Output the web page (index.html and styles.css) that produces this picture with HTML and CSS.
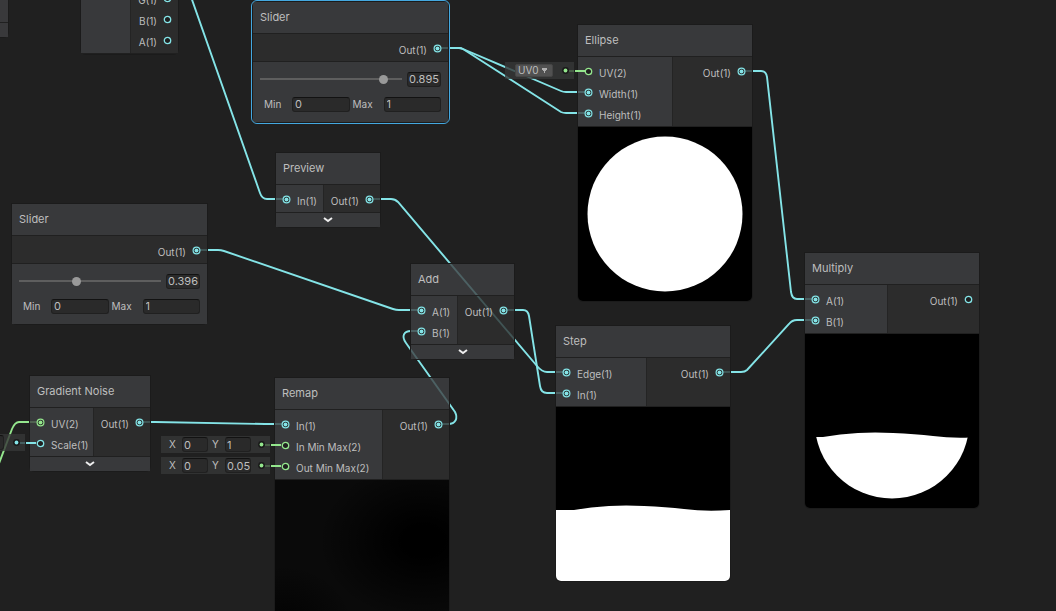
FILE: index.html
```html
<!DOCTYPE html>
<html lang="en">
<head>
<meta charset="utf-8">
<title>Shader Graph</title>
<link rel="stylesheet" href="styles.css">
</head>
<body>
<svg class="defs" aria-hidden="true">
  <symbol id="on" viewBox="0 0 9 9"><circle cx="4.5" cy="4.5" r="3.4" fill="#202020" stroke="currentColor" stroke-width="1.2"/><circle cx="4.5" cy="4.5" r="2" fill="currentColor"/></symbol>
  <symbol id="off" viewBox="0 0 9 9"><circle cx="4.5" cy="4.5" r="3.2" fill="#202020" stroke="currentColor" stroke-width="1.3"/></symbol>
  <symbol id="dot" viewBox="0 0 9 9"><circle cx="4.5" cy="4.5" r="3.4" fill="#191919"/><circle cx="4.5" cy="4.5" r="1.9" fill="currentColor"/></symbol>
  <symbol id="chev" viewBox="0 0 10 6"><path d="M1 1 L5 4 L9 1" fill="none" stroke="#eeeeee" stroke-width="2"/></symbol>
</svg>
<main class="canvas">
  <svg class="wires" aria-hidden="true">
    <path d="M190 -6 L260 193 Q262 199 267 199 H286"/>
    <path d="M437 48 H459 Q461 48 463 49 L561 91 Q563 92 566 92 H588"/>
    <path d="M437 48 H459 Q461 48 463 49 L561 112 Q563 113 566 113 H588"/>
    <path d="M742 71 H761 Q766 71 767 77 L791 292 Q792 299 797 299 H816"/>
    <path d="M369 199 H391 Q395 199 398 202 L537 366 Q542 372 547 372 H567"/>
    <path d="M196 250 H218 Q221 250 224 251 L393 309 Q396 310 399 310 H421"/>
    <path d="M503 310 H523 Q528 310 529 316 L540 386 Q541 393 547 393 H567"/>
    <path d="M438 424 H448 C456 424 458 418 455 412 L406 343 C401 336 404 331 411 331 H421"/>
    <path d="M140 422 H155 L265 424 H285"/>
    <path d="M720 372 H741 Q745 372 747 370 L789 324 Q792 320 797 320 H816"/>
    <path class="green" d="M-2 466 L12 429 Q15 422 19 422 H40"/>
  </svg>

  <section class="node edge-frag"><div class="frag-top"></div><div class="frag-bottom"></div></section>

  <section class="node split">
    <div class="ports">
      <div class="ins"></div>
      <div class="outs">
        <div class="port">G(1)<svg><use href="#off"/></svg></div>
        <div class="port">B(1)<svg><use href="#off"/></svg></div>
        <div class="port">A(1)<svg><use href="#off"/></svg></div>
      </div>
    </div>
  </section>

  <section class="node slider-a selected">
    <h2>Slider</h2>
    <div class="ports"><div class="outs"><div class="port">Out(1)<svg><use href="#on"/></svg></div></div></div>
    <div class="controls">
      <div class="line"><input type="range" min="0" max="1" step="0.001" value="0.895" aria-label="Value"><input class="value" type="text" value="0.895" aria-label="Value"></div>
      <div class="line limits"><label for="min-a">Min</label><input id="min-a" type="text" value="0"><label for="max-a">Max</label><input id="max-a" type="text" value="1"></div>
    </div>
  </section>

  <section class="node slider-b">
    <h2>Slider</h2>
    <div class="ports"><div class="outs"><div class="port">Out(1)<svg><use href="#on"/></svg></div></div></div>
    <div class="controls">
      <div class="line"><input type="range" min="0" max="1" step="0.001" value="0.396" aria-label="Value"><input class="value" type="text" value="0.396" aria-label="Value"></div>
      <div class="line limits"><label for="min-b">Min</label><input id="min-b" type="text" value="0"><label for="max-b">Max</label><input id="max-b" type="text" value="1"></div>
    </div>
  </section>

  <section class="node preview-node">
    <h2>Preview</h2>
    <div class="ports">
      <div class="ins"><div class="port"><svg><use href="#on"/></svg>In(1)</div></div>
      <div class="outs"><div class="port">Out(1)<svg><use href="#on"/></svg></div></div>
    </div>
    <button class="expand" aria-label="Expand preview"><svg><use href="#chev"/></svg></button>
  </section>

  <section class="node ellipse">
    <h2>Ellipse</h2>
    <div class="ports">
      <div class="ins">
        <div class="port"><svg class="green"><use href="#off"/></svg>UV(2)</div>
        <div class="port"><svg><use href="#on"/></svg>Width(1)</div>
        <div class="port"><svg><use href="#on"/></svg>Height(1)</div>
      </div>
      <div class="outs"><div class="port">Out(1)<svg><use href="#on"/></svg></div></div>
    </div>
    <svg class="picture" viewBox="0 0 174 174"><circle cx="87" cy="87" r="77.5" fill="#fff"/></svg>
  </section>

  <section class="node add">
    <h2>Add</h2>
    <div class="ports">
      <div class="ins">
        <div class="port"><svg><use href="#on"/></svg>A(1)</div>
        <div class="port"><svg><use href="#on"/></svg>B(1)</div>
      </div>
      <div class="outs"><div class="port">Out(1)<svg><use href="#on"/></svg></div></div>
    </div>
    <button class="expand" aria-label="Expand preview"><svg><use href="#chev"/></svg></button>
  </section>

  <section class="node noise">
    <h2>Gradient Noise</h2>
    <div class="ports">
      <div class="ins">
        <div class="port"><svg class="green"><use href="#on"/></svg>UV(2)</div>
        <div class="port"><svg><use href="#off"/></svg>Scale(1)</div>
      </div>
      <div class="outs"><div class="port">Out(1)<svg><use href="#on"/></svg></div></div>
    </div>
    <button class="expand" aria-label="Expand preview"><svg><use href="#chev"/></svg></button>
  </section>

  <section class="node remap">
    <h2>Remap</h2>
    <div class="ports">
      <div class="ins">
        <div class="port"><svg><use href="#on"/></svg>In(1)</div>
        <div class="port"><svg class="green"><use href="#off"/></svg>In Min Max(2)</div>
        <div class="port"><svg class="green"><use href="#off"/></svg>Out Min Max(2)</div>
      </div>
      <div class="outs"><div class="port">Out(1)<svg><use href="#on"/></svg></div></div>
    </div>
    <div class="picture dim"></div>
  </section>

  <section class="node step">
    <h2>Step</h2>
    <div class="ports">
      <div class="ins">
        <div class="port"><svg><use href="#on"/></svg>Edge(1)</div>
        <div class="port"><svg><use href="#on"/></svg>In(1)</div>
      </div>
      <div class="outs"><div class="port">Out(1)<svg><use href="#on"/></svg></div></div>
    </div>
    <svg class="picture" viewBox="0 0 174 174"><path id="wave" fill="#fff" d="M0 103 H18 Q35 100 53 99 Q70 98 88 99 Q110 100 128 102 Q150 105 174 103 V174 H0Z"/></svg>
  </section>

  <section class="node multiply">
    <h2>Multiply</h2>
    <div class="ports">
      <div class="ins">
        <div class="port"><svg><use href="#on"/></svg>A(1)</div>
        <div class="port"><svg><use href="#on"/></svg>B(1)</div>
      </div>
      <div class="outs"><div class="port">Out(1)<svg><use href="#off"/></svg></div></div>
    </div>
    <svg class="picture" viewBox="0 0 174 174"><clipPath id="disc"><circle cx="87" cy="87" r="77.5"/></clipPath><g clip-path="url(#disc)"><use href="#wave"/></g></svg>
  </section>

  <div class="editor uv-editor">
    <select aria-label="UV channel"><option>UV0</option></select>
    <svg class="green"><use href="#dot"/></svg>
  </div>
  <div class="editor in-editor">
    <label for="in-x">X</label><input id="in-x" type="text" value="0"><label for="in-y">Y</label><input id="in-y" type="text" value="1">
    <svg class="green"><use href="#dot"/></svg>
  </div>
  <div class="editor out-editor">
    <label for="out-x">X</label><input id="out-x" type="text" value="0"><label for="out-y">Y</label><input id="out-y" type="text" value="0.05">
    <svg class="green"><use href="#dot"/></svg>
  </div>
  <div class="editor scale-editor">
    <input type="text" aria-label="Scale">
    <svg><use href="#dot"/></svg>
  </div>

  <svg class="wires stubs" aria-hidden="true">
    <path class="green" d="M575 71 H585 M271 445 H281 M271 466 H281"/>
    <path d="M26 443 H36"/>
    <path class="green faint" d="M569 71 H574 M265 445 H270 M265 466 H270"/>
    <path class="faint" d="M20 443 H25"/>
  </svg>
</main>
</body>
</html>
```
FILE: styles.css
```css
* { box-sizing: border-box; }

body {
  margin: 0;
  background: #202020;
  color: #bebebe;
  font: 10px/21px Inter, "Liberation Sans", sans-serif;
}

.defs { position: absolute; width: 0; height: 0; }

.canvas {
  position: relative;
  width: 100%;
  height: 100vh;
  overflow: hidden;
}

.wires {
  position: absolute;
  inset: 0;
  width: 100%;
  height: 100%;
  fill: none;
  stroke: #84e4e7;
  stroke-width: 1.9;
  pointer-events: none;
}
.wires .green { stroke: #94e68d; }
.wires .faint { opacity: 0.25; }
.stubs { stroke-width: 2; }

/* Nodes */
.node {
  position: absolute;
  box-shadow: 0 0 0 1px #1b1b1b;
  border-radius: 0 0 5px 5px;
}
.node h2 {
  margin: 0;
  height: 32px;
  padding: 0 7px;
  border-bottom: 1px solid #202020;
  font-size: 11px;
  font-weight: 400;
  line-height: 30px;
}
.node h2, .ins, .controls, .expand {
  background: rgba(63, 64, 66, 0.8);
  background-clip: padding-box;
}
.frag-top, .frag-bottom { background: #39393b; }
.outs { background: rgba(47, 47, 47, 0.8); }

.ports { display: flex; border-bottom: 1px solid #202020; }
.ins, .outs { padding: 4px 6px 2px; }
.ins { border-right: 1px solid #242424; }
.outs { flex: 1; }
.port {
  display: flex;
  align-items: center;
  gap: 6px;
  height: 21px;
  line-height: 24px;
  white-space: nowrap;
}
.port svg { align-self: flex-start; margin-top: 6px; }
.outs .port { justify-content: flex-end; }
.ports .port { align-items: flex-start; }
.port svg, .editor svg { width: 9px; height: 9px; flex: none; color: #84e4e7; }
.port svg.green, .editor svg.green { color: #94e68d; }

.expand {
  display: flex;
  align-items: center;
  justify-content: center;
  width: 100%;
  height: 14px;
  padding: 0;
  border: 0;
}
.expand svg { width: 10px; height: 6px; }

.picture {
  display: block;
  width: 100%;
  aspect-ratio: 1;
  background: #000;
  border-radius: 0 0 5px 5px;
}
.dim {
  background:
    radial-gradient(ellipse at 85% 35%, #000 10%, transparent 50%),
    radial-gradient(ellipse at 5% 85%, #020202 0%, transparent 30%),
    #0a0a0a;
}

/* Node placement on the graph */
.edge-frag { left: -12px; top: -8px; width: 20px; }
.frag-top { height: 31px; border-bottom: 1px solid #202020; }
.frag-bottom { height: 14px; }
.split { left: 81px; top: -16px; width: 97px; }
.split .ins { width: 50px; }
.slider-a { left: 253px; top: 2px; width: 195px; }
.slider-b { left: 12px; top: 204px; width: 195px; }
.preview-node { left: 276px; top: 153px; width: 104px; }
.preview-node .ins { width: 48px; }
.ellipse { left: 578px; top: 25px; width: 174px; }
.ellipse .ins { width: 95px; }
.add { left: 411px; top: 264px; width: 103px; }
.add .ins { width: 47px; }
.noise { left: 30px; top: 376px; width: 120px; }
.noise .ins { width: 64px; }
.remap { left: 275px; top: 378px; width: 174px; }
.remap .ins { width: 108px; }
.step { left: 556px; top: 326px; width: 174px; }
.step .ins { width: 91px; }
.multiply { left: 805px; top: 253px; width: 174px; }
.multiply .ins { width: 83px; }

.selected { outline: 1px solid #44a8e0; outline-offset: 1px; border-radius: 4px; }

/* Fields */
input, select, button { font: inherit; color: inherit; }
input[type="text"] {
  min-width: 0;
  height: 15px;
  padding: 0 2px;
  border: 1px solid #202020;
  border-top-color: #121212;
  border-radius: 3px;
  background: #2a2a2a;
  font-size: 11px;
  line-height: 13px;
}

.controls { padding: 6px 7px 7px; }
.line { display: flex; align-items: center; height: 22px; }
.controls .value { width: 34px; padding: 0 0 0 1px; margin-left: 5px; }
.limits { margin-top: 3px; padding-left: 4px; }
.limits label { width: 28px; }
.limits label + input { flex: 1; }
.limits input + label { width: 34px; padding-left: 3px; }

input[type="range"] {
  appearance: none;
  flex: 1;
  min-width: 0;
  height: 9px;
  margin: 0;
  background: linear-gradient(#5e5e5e, #5e5e5e) center / 100% 2px no-repeat;
}
input[type="range"]::-webkit-slider-thumb {
  appearance: none;
  width: 9px;
  height: 9px;
  border-radius: 50%;
  background: #999;
}

/* Inline port editors */
.editor {
  position: absolute;
  display: flex;
  align-items: center;
  height: 17px;
  padding: 0 4px 0 8px;
  background: rgba(54, 55, 55, 0.8);
}
.editor svg { margin-left: auto; }
.editor label { width: 13px; }
.editor input[type="text"] { width: 26px; padding: 0 0 0 1px; }
.editor input + label { width: 17px; padding-left: 4px; }
.uv-editor { left: 505px; top: 62px; width: 69px; padding-left: 10px; }
.in-editor { left: 161px; top: 436px; width: 109px; }
.out-editor { left: 161px; top: 457px; width: 109px; }
.scale-editor { left: -30px; top: 434px; width: 55px; }
.scale-editor input[type="text"] { width: 26px; }

select {
  appearance: none;
  width: 38px;
  height: 13px;
  padding: 0 0 0 2px;
  border: 1px solid #454545;
  border-radius: 2px;
  background:
    conic-gradient(from -32deg at 50% 100%, #b0b0b0 64deg, transparent 0) right 4px center / 7px 5px no-repeat,
    #515151;
  line-height: 11px;
}
```
